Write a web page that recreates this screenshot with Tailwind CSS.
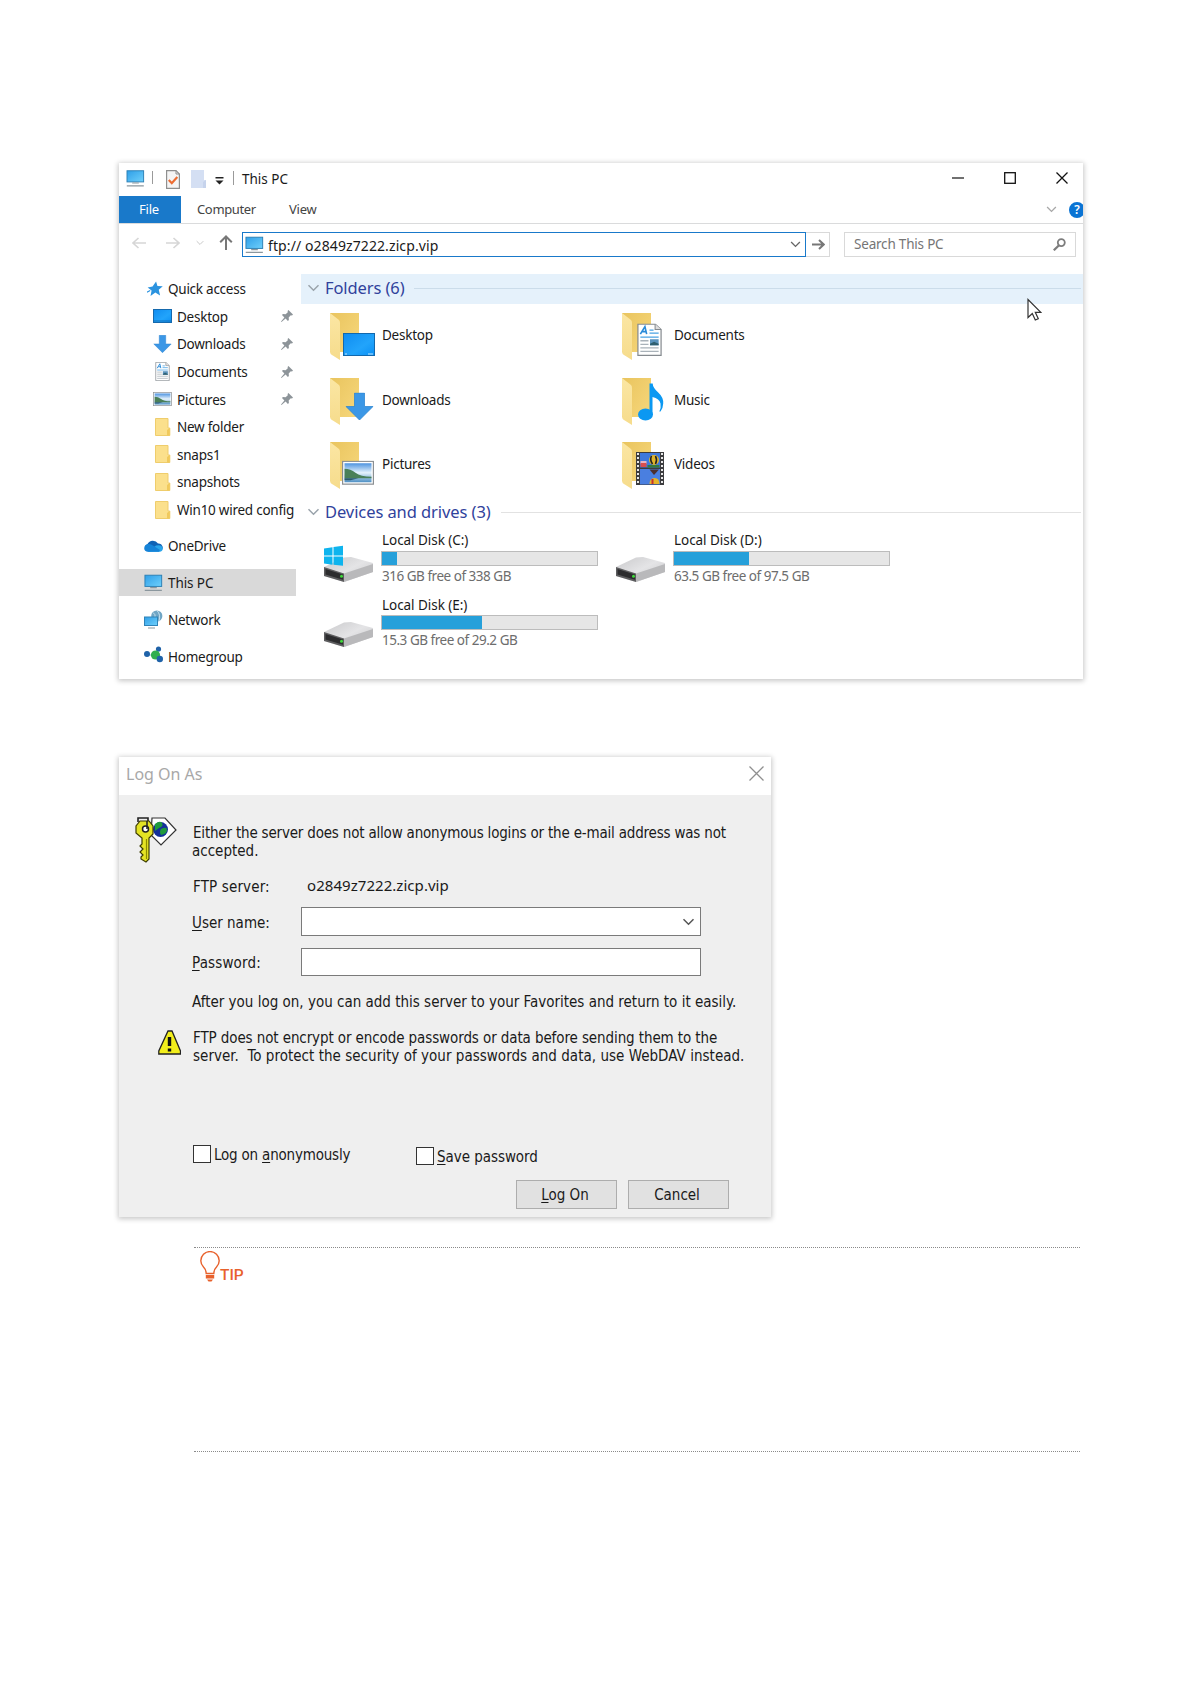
<!DOCTYPE html>
<html lang="en">
<head>
    <meta charset="UTF-8">
    <meta name="viewport" content="width=device-width, initial-scale=1.0">
    <title>This PC</title>
    <script src="https://cdn.jsdelivr.net/npm/@tailwindcss/browser@4"></script>
</head>
<body class="bg-white font-['Noto_Sans',sans-serif]">
    <!-- Shared icons -->
    <svg class="absolute w-0 h-0">
        <defs>
            <linearGradient id="screen" x1="0" y1="0" x2="1" y2="1"><stop offset="0" stop-color="#2f9fe8"/><stop offset="1" stop-color="#6fd0fb"/></linearGradient>
            <linearGradient id="desk" x1="0" y1="0" x2="1" y2="1"><stop offset="0" stop-color="#0f8cf0"/><stop offset=".6" stop-color="#22a4fb"/><stop offset="1" stop-color="#0a90f5"/></linearGradient>
            <linearGradient id="back" x1="0" y1="0" x2="1" y2="1"><stop offset="0" stop-color="#e9c45e"/><stop offset="1" stop-color="#f8d97e"/></linearGradient>
            <linearGradient id="flap" x1="0" y1="0" x2="0" y2="1"><stop offset="0" stop-color="#fbe6a3"/><stop offset="1" stop-color="#f6dc8c"/></linearGradient>
            <linearGradient id="sky" x1="0" y1="0" x2="0" y2="1"><stop offset="0" stop-color="#4d93e0"/><stop offset=".5" stop-color="#e6f3fc"/><stop offset="1" stop-color="#4d8fc4"/></linearGradient>
            <linearGradient id="metal" x1="0" y1="0" x2="1" y2="1"><stop offset="0" stop-color="#c9c9cb"/><stop offset=".5" stop-color="#e4e4e6"/><stop offset="1" stop-color="#c6c6c8"/></linearGradient>
        </defs>
        <symbol id="pc" viewBox="0 0 20 18">
            <rect x="1" y=".8" width="17.6" height="11.8" fill="url(#screen)" stroke="#2b7fb4"/>
            <path d="M6.5 13.8h7M.8 16.8h18" stroke="#8b979e" stroke-width="1.2"/>
        </symbol>
        <symbol id="folder" viewBox="0 0 16 18">
            <path d="M.5.5h12.5v9.5h1.8v7.5H.5z" fill="#fbe08c" stroke="#efcd6c"/>
            <path d="M12 17.5V12l2.8-2v7.5z" fill="#f0c95c"/>
        </symbol>
        <symbol id="pin" viewBox="0 0 12 12">
            <path d="M7.4 0L12 4.6l-1 .8-1.2-.2-2.1 2.2.2 2.7-1 .9-2.3-2.4L.5 12l-.5-.4L3.4 7.4 1 5.1l.9-1 2.7.2 2.2-2.1L6.6 1z" fill="#8d9499"/>
        </symbol>
        <symbol id="bigfolder" viewBox="0 0 48 48">
            <path d="M0 1h29v39H10V47L0 40z" fill="url(#back)"/>
            <path d="M0 1l9 7q1 1 1 3v37l-8-5q-2-1-2-4z" fill="url(#flap)"/>
        </symbol>
        <symbol id="arrow" viewBox="0 0 28 28">
            <path d="M9 .5h10V14h8.5L14 27.5.5 14H9z" fill="#3b97e6" stroke="#2f86d2" stroke-width=".8"/>
        </symbol>
        <symbol id="page" viewBox="0 0 24 32">
            <path d="M.6.6h17L23.4 6v25.4H.6z" fill="#fff" stroke="#858a8f" stroke-width="1.2"/>
            <path d="M17.5.6V6h5.9" fill="#ddd" stroke="#858a8f"/>
            <path d="M3 10.5L7.5 3l1.7 7.5M5 8h4" fill="none" stroke="#2b8bd9" stroke-width="1.6"/>
            <path d="M12 6.5h4M12 9.5h9M3 13.5h18" stroke="#4aa3e4" stroke-width="1.3"/>
            <path d="M3 17h8M3 20.5h8M3 24h18M3 27.5h18" stroke="#a9b2b9" stroke-width="1.3"/>
            <rect x="12.5" y="15.5" width="8.5" height="6" fill="#5a93bd"/><path d="M12.5 20l4-2 4.5 2v1.5h-8.5z" fill="#2f5f6f"/>
        </symbol>
        <symbol id="photo" viewBox="0 0 32 24">
            <rect x=".6" y=".6" width="30.8" height="22.8" fill="#fff" stroke="#8b8f93" stroke-width="1.2"/>
            <rect x="2.5" y="2.5" width="27" height="19" fill="url(#sky)"/>
            <path d="M2.5 8q6 0 11 4t16 4v1.5h-27z" fill="#4a8058"/><path d="M2.5 17.5h14l-8 2h-6z" fill="#2d5a6c"/>
        </symbol>
        <symbol id="drive" viewBox="0 0 49 25">
            <path d="M0 10L20 .5 27 0 49 6v9L20 25 0 19z" fill="url(#metal)"/>
            <path d="M20 16.5L49 7v8L20 25z" fill="#b9b9bb"/>
            <path d="M0 10l20 6.5V25L0 19z" fill="#5d5d5f"/><path d="M1.5 12l17.5 5.5v5.2L1.5 17.6z" fill="#2c2c2e"/>
            <circle cx="17.5" cy="19.3" r="1.5" fill="#3fd93b"/>
        </symbol>
        <symbol id="chev" viewBox="0 0 12 8"><path d="M1 1.2l5 5 5-5" fill="none" stroke="currentColor" stroke-width="1.5"/></symbol>
    </svg>

    <div class="w-[1191px] h-[1684px] overflow-hidden pl-[119px] pt-[163px]">
        <!-- Explorer window -->
        <div class="w-[964px] h-[516px] bg-white shadow-[0_1px_5px_1px_rgba(0,0,0,0.22)] text-[13.5px] tracking-[-0.25px] text-[#1a1a1a] whitespace-nowrap overflow-hidden">
            <!-- Title bar -->
            <div class="flex items-center h-[33px] pl-[7px]">
                <svg class="w-[19px] h-[17px] -mt-0.5"><use href="#pc"/></svg>
                <div class="w-px h-[13px] bg-[#9a9a9a] ml-[7px] -mt-1"></div>
                <svg class="w-[14px] h-[19px] ml-[13px] -mt-px" viewBox="0 0 14 19"><path d="M.6.6h9.4l3.4 3.4v14.4H.6z" fill="#f5f5f5" stroke="#8f8f8f" stroke-width="1.2"/><path d="M10 .6V4h3.4" fill="none" stroke="#8f8f8f"/><path d="M2.8 10l3 3.2L11.3 7" fill="none" stroke="#ec6d33" stroke-width="2.2"/></svg>
                <svg class="w-[15px] h-[18px] ml-[11px] -mt-px" viewBox="0 0 15 18"><path d="M0 0h13v10h2v8H0z" fill="#d4dff3"/><path d="M12 18v-6l3-2v8z" fill="#c6d3ec"/></svg>
                <svg class="w-[9px] h-[8px] ml-[9px] mt-0.5" viewBox="0 0 9 8"><path d="M.5 0h8v1.5h-8zM.5 3.5h8L4.5 7.5z" fill="#222"/></svg>
                <div class="w-px h-[14px] bg-[#9a9a9a] ml-[9px] -mt-1"></div>
                <span class="ml-[8px] tracking-normal">This PC</span>
                <div class="flex items-center ml-auto mr-[15px] gap-[40px] -mt-1">
                    <svg class="w-[12px] h-[13px]" viewBox="0 0 12 13"><path d="M0 7h12" stroke="#111" stroke-width="1.2"/></svg>
                    <svg class="w-[12px] h-[12px]" viewBox="0 0 12 12"><rect x=".7" y=".7" width="10.6" height="10.6" fill="none" stroke="#111" stroke-width="1.3"/></svg>
                    <svg class="w-[12px] h-[12px]" viewBox="0 0 12 12"><path d="M.5.5l11 11M11.5.5l-11 11" stroke="#111" stroke-width="1.3"/></svg>
                </div>
            </div>
            <!-- Ribbon tabs -->
            <div class="flex items-center h-[28px] border-b border-[#dadbdc] text-[13px] text-[#444]">
                <div class="flex items-center justify-center w-[62px] h-[27px] pr-[2px] bg-[#1979ca] text-white">File</div>
                <span class="w-[58px] ml-[16px] pt-px tracking-[-0.35px]">Computer</span>
                <span class="ml-[34px] pt-px">View</span>
                <svg class="w-[11px] h-[7px] ml-auto text-[#a8a8a8]"><use href="#chev"/></svg>
                <div class="flex items-center justify-center w-[16px] h-[16px] -mr-[2px] ml-[12px] rounded-full bg-[#0a74d4] text-white text-[12px] font-semibold">?</div>
            </div>
            <!-- Address bar -->
            <div class="flex h-[25px] mt-[8px] items-center">
                <svg class="w-[15px] h-[12px] ml-[13px] -mt-1" viewBox="0 0 15 12"><path d="M14 6H1M6.5 1L1 6l5.5 5" fill="none" stroke="#d6d6d6" stroke-width="1.6"/></svg>
                <svg class="w-[15px] h-[12px] ml-[18px] -mt-1" viewBox="0 0 15 12"><path d="M1 6h13M8.5 1L14 6l-5.5 5" fill="none" stroke="#d6d6d6" stroke-width="1.6"/></svg>
                <svg class="w-[8px] h-[6px] ml-[16px] -mt-1 text-[#c8c8c8]"><use href="#chev"/></svg>
                <svg class="w-[14px] h-[15px] ml-[15px] -mt-1" viewBox="0 0 14 15"><path d="M7 15V1.5M1.2 7.3L7 1.5l5.8 5.8" fill="none" stroke="#777" stroke-width="2"/></svg>
                <div class="flex items-center w-[564px] h-[25px] ml-[9px] pl-[2px] border border-[#1979ca]">
                    <svg class="w-[19px] h-[18px]"><use href="#pc"/></svg>
                    <span class="ml-[4px] pt-px text-[14px] tracking-[0.1px]">ftp:// o2849z7222.zicp.vip</span>
                    <svg class="w-[11px] h-[7px] ml-auto mr-[4px] text-[#666]"><use href="#chev"/></svg>
                </div>
                <div class="flex items-center justify-center w-[24px] h-[25px] pl-px border border-l-0 border-[#d9d9d9]">
                    <svg class="w-[13px] h-[11px]" viewBox="0 0 13 11"><path d="M0 5.5h11.5M7 1l4.800 4.500L7 10" fill="none" stroke="#777" stroke-width="2"/></svg>
                </div>
                <div class="flex items-center w-[232px] h-[25px] ml-[14px] pl-[9px] pr-[9px] border border-[#d9d9d9] text-[#757575]">
                    <span class="tracking-[-0.2px]">Search This PC</span>
                    <svg class="w-[13px] h-[13px] ml-auto" viewBox="0 0 13 13"><circle cx="8.3" cy="4.6" r="3.5" fill="none" stroke="#7d7d7d" stroke-width="1.8"/><path d="M6 7.2L.8 12.3" stroke="#7d7d7d" stroke-width="2.2"/></svg>
                </div>
            </div>

            <div class="flex">
                <!-- Navigation pane -->
                <div class="w-[182px] shrink-0 pt-[18px]">
                    <div class="flex items-center h-[27.6px] pl-[28px]">
                        <svg class="w-[16px] h-[16px]" viewBox="0 0 15 15"><path d="M8.5.5l1.300 4.300 5 .2-3.800 3.200 1.300 5.300-4.500-2.800L3.300 14l1-5L.6 6l4.600-.8z" fill="#2b93df"/><path d="M0 10.500l3-1.500" stroke="#2b93df"/></svg>
                        <span class="ml-[5px] pt-px">Quick access</span>
                    </div>
                    <div class="flex items-center h-[27.6px] pl-[34px] pr-[8px]">
                        <svg class="w-[19px] h-[14px]" viewBox="0 0 19 14"><rect x=".5" y=".5" width="18" height="13" fill="url(#desk)" stroke="#1569ad"/><path d="M1 12h17" stroke="#1470b8"/></svg>
                        <span class="ml-[5px] pt-px">Desktop</span>
                        <svg class="w-[12px] h-[12px] ml-auto"><use href="#pin"/></svg>
                    </div>
                    <div class="flex items-center h-[27.6px] pl-[34px] pr-[8px]">
                        <svg class="w-[19px] h-[18px]"><use href="#arrow"/></svg>
                        <span class="ml-[5px] pt-px">Downloads</span>
                        <svg class="w-[12px] h-[12px] ml-auto"><use href="#pin"/></svg>
                    </div>
                    <div class="flex items-center h-[27.6px] pl-[34px] pr-[8px]">
                        <svg class="w-[19px] h-[19px]"><use href="#page"/></svg>
                        <span class="ml-[5px] pt-px">Documents</span>
                        <svg class="w-[12px] h-[12px] ml-auto"><use href="#pin"/></svg>
                    </div>
                    <div class="flex items-center h-[27.6px] pl-[34px] pr-[8px]">
                        <svg class="w-[19px] h-[14px]"><use href="#photo"/></svg>
                        <span class="ml-[5px] pt-px">Pictures</span>
                        <svg class="w-[12px] h-[12px] ml-auto"><use href="#pin"/></svg>
                    </div>
                    <div class="flex items-center h-[27.6px] pl-[36px]">
                        <svg class="w-[16px] h-[18px] shrink-0"><use href="#folder"/></svg>
                        <span class="ml-[6px]">New folder</span>
                    </div>
                    <div class="flex items-center h-[27.6px] pl-[36px]">
                        <svg class="w-[16px] h-[18px] shrink-0"><use href="#folder"/></svg>
                        <span class="ml-[6px] pt-px">snaps1</span>
                    </div>
                    <div class="flex items-center h-[27.6px] pl-[36px]">
                        <svg class="w-[16px] h-[18px] shrink-0"><use href="#folder"/></svg>
                        <span class="ml-[6px] pt-px">snapshots</span>
                    </div>
                    <div class="flex items-center h-[27.6px] pl-[36px]">
                        <svg class="w-[16px] h-[18px] shrink-0"><use href="#folder"/></svg>
                        <span class="ml-[6px] pt-px">Win10 wired config</span>
                    </div>
                    <div class="flex items-center h-[27px] w-[177px] mt-[9px] pl-[25px]">
                        <svg class="w-[19px] h-[12px]" viewBox="0 0 19 12"><path d="M4 11.5A4 4 0 0 1 3.5 4 6 6 0 0 1 14 3.5a4 4 0 0 1 2.5 7.5z" fill="#0f62b5"/><path d="M4 11.8L12 5.5q6-1.5 6.800 3 0 3-3.300 3.300z" fill="#2aa5ea"/><path d="M.2 8.3Q.5 4.5 4 4q3-.3 5 1.500L16 10l-1 1.800H4Q.3 11.500.2 8.300z" fill="#1583d8"/></svg>
                        <span class="ml-[5px] pt-px">OneDrive</span>
                    </div>
                    <div class="flex items-center h-[27px] w-[177px] mt-[10px] pl-[25px] bg-[#d9d9d9]">
                        <svg class="w-[19px] h-[18px]"><use href="#pc"/></svg>
                        <span class="ml-[5px] tracking-[-0.1px]">This PC</span>
                    </div>
                    <div class="flex items-center h-[27px] w-[177px] mt-[10px] pl-[25px]">
                        <svg class="w-[19px] h-[19px]" viewBox="0 0 19 19"><circle cx="12.8" cy="6" r="5.6" fill="#6fa5c4"/><path d="M9 2.5q3 2 2 5M13 .6q4 4 2 10.5" fill="none" stroke="#c6e0ee"/><rect x=".5" y="7" width="13" height="8.5" fill="url(#screen)" stroke="#2f83b8"/><path d="M4 18h7" stroke="#8b979e"/></svg>
                        <span class="ml-[5px]">Network</span>
                    </div>
                    <div class="flex items-center h-[27px] w-[177px] mt-[10px] pl-[25px]">
                        <svg class="w-[19px] h-[17px] -mt-1" viewBox="0 0 19 17"><path d="M3 9h9l4-6M12 9l4 5" stroke="#8cc6d8" fill="none"/><circle cx="3" cy="8" r="3" fill="#1f62a8"/><circle cx="14.5" cy="3" r="2.6" fill="#1f62a8"/><circle cx="11.5" cy="9" r="4.6" fill="#2fae4e"/><circle cx="15.8" cy="13" r="3.2" fill="#1f62a8"/></svg>
                        <span class="ml-[5px]">Homegroup</span>
                    </div>
                </div>

                <!-- File list -->
                <div class="flex-1 pt-[17px]">
                    <div class="flex items-center h-[30px] pl-[6px] pr-[2px] pb-0.5 bg-[#e5f1fb]">
                        <svg class="w-[13px] h-[8px] text-[#9aa3ab]"><use href="#chev"/></svg>
                        <span class="ml-[5px] text-[16.5px] tracking-[-0.1px] text-[#30429c]">Folders (6)</span>
                        <div class="flex-1 h-px ml-[9px] bg-[#cbdcea]"></div>
                    </div>
                    <div class="grid grid-cols-[292px_292px] auto-rows-[64.5px] pl-[29px] pt-[8px]">
                        <div class="flex">
                            <svg class="w-[48px] h-[48px]" viewBox="0 0 48 48"><use href="#bigfolder" width="48" height="48"/><rect x="13.5" y="21.5" width="31" height="22" fill="url(#desk)" stroke="#1268ad"/><path d="M15 42h2M38 42h5" stroke="#bfe3fb"/></svg>
                            <span class="ml-[4px] mt-[13px]">Desktop</span>
                        </div>
                        <div class="flex">
                            <svg class="w-[48px] h-[48px]" viewBox="0 0 48 48"><use href="#bigfolder" width="48" height="48"/><use href="#page" x="15" y="11.5" width="25" height="32.5"/></svg>
                            <span class="ml-[4px] mt-[13px]">Documents</span>
                        </div>
                        <div class="flex">
                            <svg class="w-[48px] h-[48px]" viewBox="0 0 48 48"><use href="#bigfolder" width="48" height="48"/><use href="#arrow" x="15.5" y="15.5" width="28" height="28"/></svg>
                            <span class="ml-[4px] mt-[13px]">Downloads</span>
                        </div>
                        <div class="flex">
                            <svg class="w-[48px] h-[48px]" viewBox="0 0 48 48"><use href="#bigfolder" width="48" height="48"/><ellipse cx="23.5" cy="37.5" rx="7.500" ry="6" fill="#0b98f2"/><path d="M27.500 38V6.500h3.200q0 4 5.500 9t5 11q0 4-2.700 8h-1.200q2-4 1.200-8-1-5-8-6.500V38z" fill="#0b98f2"/></svg>
                            <span class="ml-[4px] mt-[13px]">Music</span>
                        </div>
                        <div class="flex">
                            <svg class="w-[48px] h-[48px]" viewBox="0 0 48 48"><use href="#bigfolder" width="48" height="48"/><use href="#photo" x="12" y="19.5" width="32" height="24.5"/></svg>
                            <span class="ml-[4px] mt-[13px]">Pictures</span>
                        </div>
                        <div class="flex">
                            <svg class="w-[48px] h-[48px]" viewBox="0 0 48 48"><use href="#bigfolder" width="48" height="48"/><g transform="translate(-.5)"><rect x="14.5" y="11" width="28" height="33" fill="#3c3c3e"/><rect x="18.5" y="12" width="20" height="14.5" fill="#3e78dc"/><rect x="18.5" y="28" width="20" height="15.5" fill="#4a7fe0"/><path d="M16.5 12v32M40.5 12v32" stroke="#e8e8e8" stroke-width="2" stroke-dasharray="2 2"/><ellipse cx="32.5" cy="19" rx="5" ry="5" fill="#e0b52c"/><path d="M30 15q-2 4 1 8M34 15q2 4 0 8" stroke="#222" stroke-width="1.600" fill="none"/><path d="M19 20h6v3h-6z" fill="#e9b4c0"/><path d="M19 22h6v4h-6z" fill="#d94e4e"/><path d="M26 24h12v2.500H26z" fill="#357a3f"/><path d="M28 28.500l4.500 5.500 5-5.500z" fill="#4c2f2f"/><path d="M28 43q0-6 5-6t5 6z" fill="#e5b529"/><path d="M31 38v5" stroke="#c92f2f" stroke-width="2"/></g></svg>
                            <span class="ml-[4px] mt-[13px]">Videos</span>
                        </div>
                    </div>
                    <div class="flex items-center h-[30px] -mt-[9px] pl-[6px] pr-[2px]">
                        <svg class="w-[13px] h-[8px] mt-px text-[#9aa3ab]"><use href="#chev"/></svg>
                        <span class="ml-[5px] pt-px text-[16.5px] tracking-[-0.08px] text-[#30429c]">Devices and drives (3)</span>
                        <div class="flex-1 h-px mt-0.5 ml-[10px] bg-[#e2e2e2]"></div>
                    </div>
                    <div class="grid grid-cols-[292px_292px] auto-rows-[64.5px] pl-[23px] pt-[4px]">
                        <div class="flex">
                            <svg class="w-[50px] h-[37px] mt-[14px]" viewBox="0 0 50 37"><use href="#drive" x="0" y="12" width="49" height="25"/><path d="M0 3.5l8.500-1.200v8.200H0zM9.500 2.100L19 .8v9.700H9.500zM0 11.500h8.500v8.300L0 18.500zM9.500 11.500H19v9.300l-9.500-1z" fill="#0eb4ee"/></svg>
                            <div class="ml-[7px]">
                                <div class="h-[20px] leading-[19px] pl-px tracking-[-0.05px]">Local Disk (C:)</div>
                                <div class="w-[217px] h-[15px] border border-[#bcbcbc] bg-[#e6e6e6]"><div class="h-full bg-[#26a0da]" style="width: 7%"></div></div>
                                <div class="h-[20px] leading-[21px] pl-px tracking-[-0.48px] text-[#6d6d6d]">316 GB free of 338 GB</div>
                            </div>
                        </div>
                        <div class="flex">
                            <svg class="w-[50px] h-[37px] mt-[14px]" viewBox="0 0 50 37"><use href="#drive" x="0" y="12" width="49" height="25"/></svg>
                            <div class="ml-[7px]">
                                <div class="h-[20px] leading-[19px] pl-px tracking-[-0.05px]">Local Disk (D:)</div>
                                <div class="w-[217px] h-[15px] border border-[#bcbcbc] bg-[#e6e6e6]"><div class="h-full bg-[#26a0da]" style="width: 35%"></div></div>
                                <div class="h-[20px] leading-[21px] pl-px tracking-[-0.48px] text-[#6d6d6d]">63.5 GB free of 97.5 GB</div>
                            </div>
                        </div>
                        <div class="flex">
                            <svg class="w-[50px] h-[37px] mt-[15px]" viewBox="0 0 50 37"><use href="#drive" x="0" y="12" width="49" height="25"/></svg>
                            <div class="ml-[7px]">
                                <div class="h-[20px] leading-[20px] pl-px tracking-[-0.05px]">Local Disk (E:)</div>
                                <div class="w-[217px] h-[15px] border border-[#bcbcbc] bg-[#e6e6e6]"><div class="h-full bg-[#26a0da]" style="width: 46.5%"></div></div>
                                <div class="h-[20px] leading-[21px] pl-px tracking-[-0.48px] text-[#6d6d6d]">15.3 GB free of 29.2 GB</div>
                            </div>
                        </div>
                    </div>
                </div>
            </div>
        </div>
        <!-- Mouse pointer -->
        <svg class="absolute left-[1027px] top-[298px] w-[15px] h-[23px]" viewBox="0 0 15 23"><path d="M1 1.5v18l4.300-4 3 6.500 3-1.300-3-6.400h5.500z" fill="#fff" stroke="#333" stroke-width="1.2"/></svg>

        <!-- Log on dialog -->
        <div class="w-[652px] h-[460px] mt-[78px] bg-[#efefef] shadow-[0_1px_5px_1px_rgba(0,0,0,0.22)] font-['DejaVu_Sans_Condensed','DejaVu_Sans',sans-serif] text-[15px] leading-[18px] text-[#1a1a1a] whitespace-nowrap overflow-hidden">
            <div class="flex items-center justify-between h-[38px] pl-[7px] pr-[7px] bg-white font-['Noto_Sans',sans-serif] text-[16px] text-[#a8a8a8]">
                <span class="-mt-1">Log On As</span>
                <svg class="w-[15px] h-[15px] -mt-1.5" viewBox="0 0 15 15"><path d="M.5.5l14 14M14.5.5l-14 14" stroke="#8f8f8f" stroke-width="1.3"/></svg>
            </div>
            <div class="flex h-[79px] pt-[22px] pl-[16px]">
                <svg class="w-[42px] h-[46px]" viewBox="0 0 42 46">
                    <path d="M17 1h13l11 12-15 15-10-10z" fill="#fff" stroke="#333" stroke-width="1.2"/>
                    <circle cx="25.5" cy="12.5" r="7.500" fill="#14309a"/><path d="M20 7q5-4 7-1t-3 5l-4 3zM26 12q6-3 6 1t-6 5q-2-3 0-6z" fill="#1f9a3c"/>
                    <path d="M3 5V1h10v5" fill="none" stroke="#222" stroke-width="1.6"/>
                    <path d="M5 4h9l4 5v8l-4 4v21l-3 3-5-3v-2l2-2-3-3 3-3-3-3 2-2v-6l-6-5V9z" fill="#e4e324" stroke="#3c3c00" stroke-width="1.2"/>
                    <path d="M11.5 22v20" stroke="#8c8b00" stroke-width="1.2"/><circle cx="10.5" cy="12" r="3" fill="#fff" stroke="#222" stroke-width="1.5"/><path d="M12 4v8" stroke="#222" stroke-width="1.5"/>
                </svg>
                <div class="ml-[16px] mt-[7px]">
                    <p class="tracking-[-0.19px]">Either the server does not allow anonymous logins or the e-mail address was not</p>
                    <p class="-ml-px">accepted.</p>
                </div>
            </div>
            <div class="flex items-center h-[25px] pl-[74px]">
                <span class="w-[114px] tracking-[0.15px]">FTP server:</span>
                <span class="-mt-1 font-['Noto_Sans',sans-serif] tracking-[0.05px]">o2849z7222.zicp.vip</span>
            </div>
            <div class="flex items-center h-[29px] mt-[8px] pl-[73px]">
                <span class="w-[109px] pt-0.5"><u class="underline-offset-2">U</u>ser name:</span>
                <div class="flex items-center justify-end w-[400px] h-[29px] pr-[5px] border border-[#7a7a7a] bg-white text-[#555]">
                    <svg class="w-[13px] h-[8px]"><use href="#chev"/></svg>
                </div>
            </div>
            <div class="flex items-center h-[28px] mt-[12px] pl-[73px]">
                <span class="w-[109px] pt-px tracking-[0.15px]"><u class="underline-offset-2">P</u>assword:</span>
                <div class="w-[400px] h-[28px] border border-[#7a7a7a] bg-white"></div>
            </div>
            <p class="mt-[17px] pl-[73px]">After you log on, you can add this server to your Favorites and return to it easily.</p>
            <div class="flex mt-[18px] pl-[39px]">
                <svg class="w-[23px] h-[25px] mt-px" viewBox="0 0 23 25"><path d="M10 1h4l8.500 20v3H.8v-3z" fill="#f2ee1c" stroke="#222" stroke-width="1.3"/><path d="M11.5 7v9M11.5 18.5v3" stroke="#111" stroke-width="3.4"/></svg>
                <div class="ml-[12px]">
                    <p class="tracking-[-0.1px]">FTP does not encrypt or encode passwords or data before sending them to the</p>
                    <p class="tracking-[0.03px]">server.&nbsp; To protect the security of your passwords and data, use WebDAV instead.</p>
                </div>
            </div>
            <div class="flex mt-[79px] pl-[74px]">
                <div class="flex items-center w-[223px] h-[19px]">
                    <div class="w-[18px] h-[18px] border-[1.5px] border-[#333] bg-white"></div>
                    <span class="ml-[3px] pt-[3px] tracking-[-0.2px]">Log on <u class="underline-offset-2">a</u>nonymously</span>
                </div>
                <div class="flex items-center h-[19px] mt-[2px]">
                    <div class="w-[18px] h-[18px] border-[1.5px] border-[#333] bg-white"></div>
                    <span class="ml-[3px] pt-[3px] tracking-[-0.05px]"><u class="underline-offset-2">S</u>ave password</span>
                </div>
            </div>
            <div class="flex gap-[11px] mt-[15px] pl-[397px]">
                <button class="w-[101px] h-[29px] pr-[3px] border border-[#adadad] bg-[#e1e1e1]"><u class="underline-offset-2">L</u>og On</button>
                <button class="w-[101px] h-[29px] pr-[3px] border border-[#adadad] bg-[#e1e1e1]">Cancel</button>
            </div>
        </div>

        <!-- Tip block -->
        <div class="w-[886px] h-[205px] mt-[30px] ml-[75px] border-y border-dotted border-[#8a8a8a]">
            <div class="flex pl-[6px] pt-[3px]">
                <svg class="w-[20px] h-[31px]" viewBox="0 0 20 31"><path d="M6.2 22.5Q6 18.5 3.5 16 .8 13 .8 9.8a9.200 9.200 0 0 1 18.400 0q0 3.200-2.700 6.200-2.500 2.500-2.700 6.500z" fill="none" stroke="#e8612c" stroke-width="1.4"/><path d="M5.8 24h8.400v3.500H5.800zM7 28.500h6l-1.500 2h-3z" fill="#e8612c"/></svg>
                <span class="mt-[15px] font-['Roboto',sans-serif] text-[15.5px] leading-[18px] font-medium text-[#e8612c]">TIP</span>
            </div>
        </div>
    </div>
</body>
</html>
